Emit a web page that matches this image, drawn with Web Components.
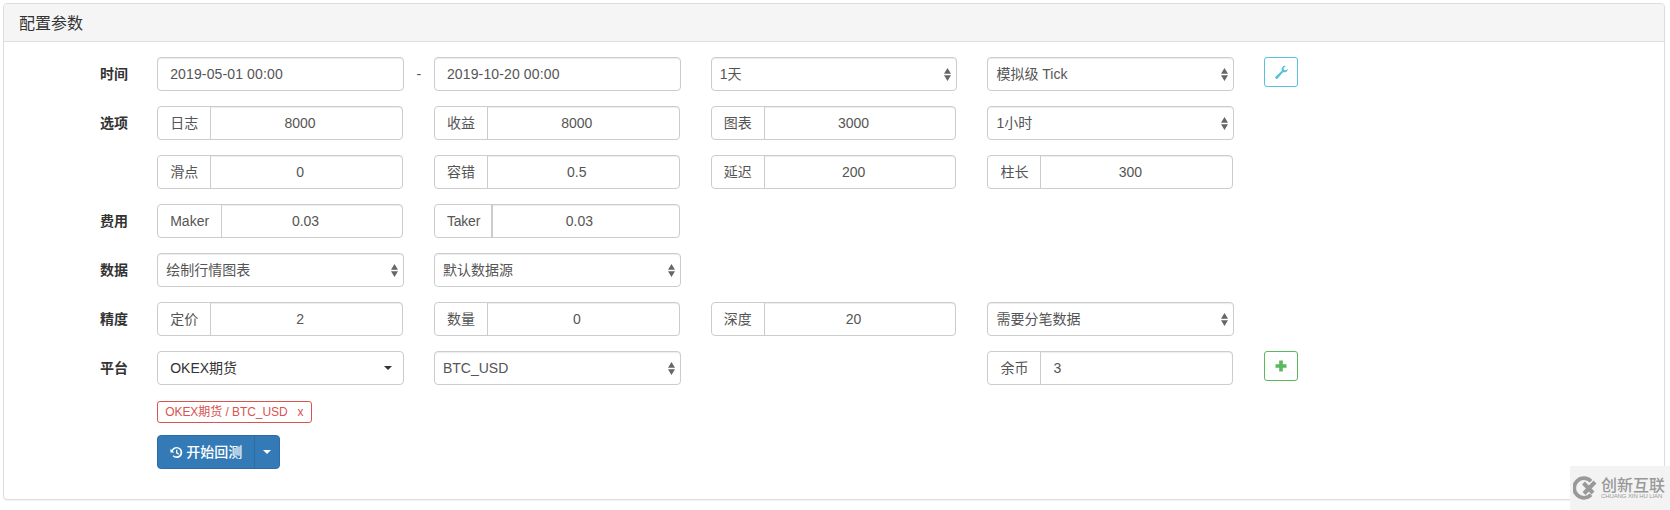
<!DOCTYPE html>
<html lang="zh-CN">
<head>
<meta charset="utf-8">
<title>配置参数</title>
<style>
  html, body { margin: 0; padding: 0; background: #fff; }
  body { font: 14px/20px "Liberation Sans", "Noto Sans CJK SC", sans-serif; color: #333; height: 510px; overflow: hidden; }
  .c1 { grid-column: 2; }
  .c2 { grid-column: 4; }
  .c3 { grid-column: 6; }
  .c4 { grid-column: 8; }
  .c5 { grid-column: 10; }
  .dash { grid-column: 3; justify-self: center; color: #555; line-height: 34px; }
  .date { letter-spacing: .13px; }
  .below { display: flex; flex-direction: column; align-items: flex-start; gap: 12px; margin: 1px 0 0 153.2px; }
</style>
</head>
<body>
<template id="t-panel">
  <style>
    :host { display: block; margin: 3px 0 0 3px; width: 1662px; height: 497px; box-sizing: border-box; border: 1px solid #ddd; border-radius: 4px; background: #fff; box-shadow: 0 1px 1px rgba(0,0,0,.05); }
    header { height: 38px; box-sizing: border-box; padding: 10px 15px 0; background: #f5f5f5; border-bottom: 1px solid #ddd; border-radius: 3px 3px 0 0; font-size: 16px; line-height: 20px; color: #333; }
    main { display: flex; flex-direction: column; gap: 15px; padding-top: 15px; }
  </style>
  <header><slot name="title"></slot></header>
  <main><slot></slot></main>
</template>

<template id="t-row">
  <style>
    :host { display: grid; grid-template-columns: 153.2px 246.75px 30px 246.75px 30px 246.75px 30px 246.75px 30px auto; align-items: start; min-height: 34px; }
    .lbl { grid-column: 1; padding-left: 96px; font-weight: 700; line-height: 34px; color: #333; white-space: nowrap; }
  </style>
  <div class="lbl"></div>
  <slot></slot>
</template>

<template id="t-text">
  <style>
    :host { display: block; height: 34px; box-sizing: border-box; border: 1px solid #ccc; border-radius: 4px; background: #fff; box-shadow: inset 0 1px 1px rgba(0,0,0,.075); padding: 0 12px; line-height: 32px; color: #555; white-space: nowrap; }
  </style>
  <slot></slot>
</template>

<template id="t-select">
  <style>
    :host { display: flex; align-items: center; justify-content: space-between; height: 34px; box-sizing: border-box; border: 1px solid #ccc; border-radius: 4px; background: #fff; box-shadow: inset 0 1px 1px rgba(0,0,0,.075); padding: 0 5px 0 8px; line-height: 32px; color: #555; white-space: nowrap; }
    svg { width: 7px; height: 13px; flex: none; display: block; }
  </style>
  <span><slot></slot></span>
  <svg viewBox="0 0 7 13" aria-hidden="true"><path d="M3.500 0 7 5.700H0zM0 7.300h7L3.500 13z" fill="#666"/></svg>
</template>

<template id="t-drop">
  <style>
    :host { display: flex; align-items: center; justify-content: space-between; height: 34px; box-sizing: border-box; border: 1px solid #ccc; border-radius: 4px; background: #fff; padding: 0 11px 0 12px; line-height: 32px; color: #333; white-space: nowrap; }
    i { width: 0; height: 0; border-top: 4px solid #333; border-left: 4px solid transparent; border-right: 4px solid transparent; flex: none; }
  </style>
  <span><slot></slot></span><i></i>
</template>

<template id="t-group">
  <style>
    :host { display: flex; height: 34px; width: calc(100% - 1px); box-sizing: border-box; border: 1px solid #ccc; border-radius: 4px; background: #fff; line-height: 32px; color: #555; white-space: nowrap; }
    .add { flex: none; padding: 0 12px; border-right: 1px solid #ccc; }
    .val { flex: 1; min-width: 0; text-align: center; padding: 0 25px 0 12px; box-shadow: inset 0 1px 1px rgba(0,0,0,.075); border-radius: 0 3px 3px 0; }
    :host([left]) .val { text-align: left; }
    :host([thick]) .add { border-right-width: 2px; padding: 0 11px 0 12px; letter-spacing: -.2px; }
  </style>
  <div class="add"></div>
  <div class="val"><slot></slot></div>
</template>

<template id="t-iconbtn">
  <style>
    :host { display: flex; align-items: center; justify-content: center; width: 34px; height: 30px; box-sizing: border-box; border-radius: 3px; border: 1px solid var(--c); background: #fff; color: var(--c); }
    ::slotted(svg) { width: var(--s, 14px); height: var(--s, 14px); display: block; fill: currentColor; }
  </style>
  <slot></slot>
</template>

<template id="t-tag">
  <style>
    :host { display: inline-block; height: 22px; box-sizing: border-box; border: 1px solid #d9534f; border-radius: 3px; padding: 0 8px 0 7px; font-size: 12px; line-height: 20px; letter-spacing: -.06px; color: #d9534f; white-space: nowrap; background: #fff; }
  </style>
  <slot></slot>
</template>

<template id="t-split">
  <style>
    :host { display: inline-flex; height: 34px; box-sizing: border-box; border: 1px solid #2e6da4; border-radius: 4px; background: #337ab7; color: #fff; line-height: 32px; white-space: nowrap; }
    .main { display: flex; align-items: center; gap: 3px; padding: 0 12px; border-right: 1px solid #2e6da4; font-weight: 500; }
    .main svg { width: 13px; height: 13px; fill: #fff; display: block; }
    .more { display: flex; align-items: center; padding: 0 8px; }
    .more i { width: 0; height: 0; border-top: 4px solid #fff; border-left: 4px solid transparent; border-right: 4px solid transparent; }
  </style>
  <div class="main">
    <svg viewBox="0 0 14 14" aria-hidden="true"><path d="M7.200 1A6 6 0 0 1 7.200 13a6 6 0 0 1-4.400-1.900l1.200-1.200A4.300 4.300 0 1 0 3 5.400L4.600 7H.5V2.900l1.300 1.300A6 6 0 0 1 7.200 1z"/><path d="M6.500 4h1.400v3.100l2 1.300-.8 1.100-2.600-1.700z"/></svg>
    <span><slot></slot></span>
  </div>
  <div class="more"><i></i></div>
</template>

<template id="t-mark">
  <style>
    :host { position: fixed; right: 0; bottom: 0; width: 100px; height: 44px; background: #f3f3f3; display: flex; align-items: center; gap: 3px; padding: 8px 0 9px 3px; box-sizing: border-box; color: #999; overflow: hidden; }
    svg { width: 25px; height: 24px; flex: none; display: block; }
    .txt { display: flex; flex-direction: column; }
    .big { font-size: 16px; line-height: 17px; font-weight: 500; font-family: "Noto Sans CJK SC", sans-serif; white-space: nowrap; }
    .small { font-size: 6px; line-height: 6px; letter-spacing: -.1px; white-space: nowrap; font-family: "Liberation Sans", sans-serif; }
  </style>
  <svg viewBox="0 0 25 24" aria-hidden="true"><path d="M18 5.200A9.800 9.800 0 1 0 18 18.800" fill="none" stroke="#999" stroke-width="3.800"/><path d="M10.500 7 L20 17 M22 6 L11 17.500" fill="none" stroke="#999" stroke-width="4"/></svg>
  <div class="txt"><span class="big"><slot></slot></span><span class="small"><slot name="en"></slot></span></div>
</template>

<script>
  function define(name, tplId, attrInit) {
    customElements.define(name, class extends HTMLElement {
      constructor() {
        super();
        const root = this.attachShadow({ mode: 'open' });
        root.appendChild(document.getElementById(tplId).content.cloneNode(true));
      }
      connectedCallback() { if (attrInit) attrInit(this, this.shadowRoot); }
    });
  }
  define('cfg-panel', 't-panel');
  define('cfg-row', 't-row', (el, r) => { r.querySelector('.lbl').textContent = el.getAttribute('label') || ''; });
  define('cfg-text', 't-text');
  define('cfg-select', 't-select');
  define('cfg-drop', 't-drop');
  define('cfg-group', 't-group', (el, r) => { r.querySelector('.add').textContent = el.getAttribute('addon') || ''; });
  define('cfg-iconbtn', 't-iconbtn');
  define('cfg-tag', 't-tag');
  define('cfg-split', 't-split');
  define('cfg-mark', 't-mark');
</script>

<cfg-panel>
  <span slot="title">配置参数</span>
  <cfg-row label="时间">
    <cfg-text class="c1 date">2019-05-01 00:00</cfg-text>
    <span class="dash">-</span>
    <cfg-text class="c2 date">2019-10-20 00:00</cfg-text>
    <cfg-select class="c3">1天</cfg-select>
    <cfg-select class="c4">模拟级 Tick</cfg-select>
    <cfg-iconbtn class="c5" style="--c:#5bc0de;--s:15px">
      <svg viewBox="0 0 14 14" aria-hidden="true"><path d="M13 3.600a3.200 3.200 0 0 1-4.300 3L3.400 12.500a1.200 1.200 0 0 1-1.900 0 1.300 1.300 0 0 1 0-1.800L7.300 5.400A3.200 3.200 0 0 1 10.900.9L9 2.800l.3 1.800 1.800.4z"/></svg>
    </cfg-iconbtn>
  </cfg-row>
  <cfg-row label="选项">
    <cfg-group class="c1" addon="日志">8000</cfg-group>
    <cfg-group class="c2" addon="收益">8000</cfg-group>
    <cfg-group class="c3" addon="图表">3000</cfg-group>
    <cfg-select class="c4">1小时</cfg-select>
  </cfg-row>
  <cfg-row>
    <cfg-group class="c1" addon="滑点">0</cfg-group>
    <cfg-group class="c2" addon="容错">0.5</cfg-group>
    <cfg-group class="c3" addon="延迟">200</cfg-group>
    <cfg-group class="c4" addon="柱长">300</cfg-group>
  </cfg-row>
  <cfg-row label="费用">
    <cfg-group class="c1" addon="Maker">0.03</cfg-group>
    <cfg-group class="c2" addon="Taker" thick>0.03</cfg-group>
  </cfg-row>
  <cfg-row label="数据">
    <cfg-select class="c1">绘制行情图表</cfg-select>
    <cfg-select class="c2">默认数据源</cfg-select>
  </cfg-row>
  <cfg-row label="精度">
    <cfg-group class="c1" addon="定价">2</cfg-group>
    <cfg-group class="c2" addon="数量">0</cfg-group>
    <cfg-group class="c3" addon="深度">20</cfg-group>
    <cfg-select class="c4">需要分笔数据</cfg-select>
  </cfg-row>
  <cfg-row label="平台">
    <cfg-drop class="c1">OKEX期货</cfg-drop>
    <cfg-select class="c2">BTC_USD</cfg-select>
    <cfg-group class="c4" addon="余币" left>3</cfg-group>
    <cfg-iconbtn class="c5" style="--c:#5cb85c">
      <svg viewBox="0 0 14 14" aria-hidden="true"><path d="M5.200 1.500h3.600v3.700h3.700v3.600H8.800v3.700H5.200V8.800H1.500V5.200h3.700z"/></svg>
    </cfg-iconbtn>
  </cfg-row>
  <div class="below">
    <cfg-tag>OKEX期货 / BTC_USD&nbsp;&nbsp;&nbsp;x</cfg-tag>
    <cfg-split>开始回测</cfg-split>
  </div>
</cfg-panel>
<cfg-mark>创新互联<span slot="en">CHUANG XIN HU LIAN</span></cfg-mark>
</body>
</html>
